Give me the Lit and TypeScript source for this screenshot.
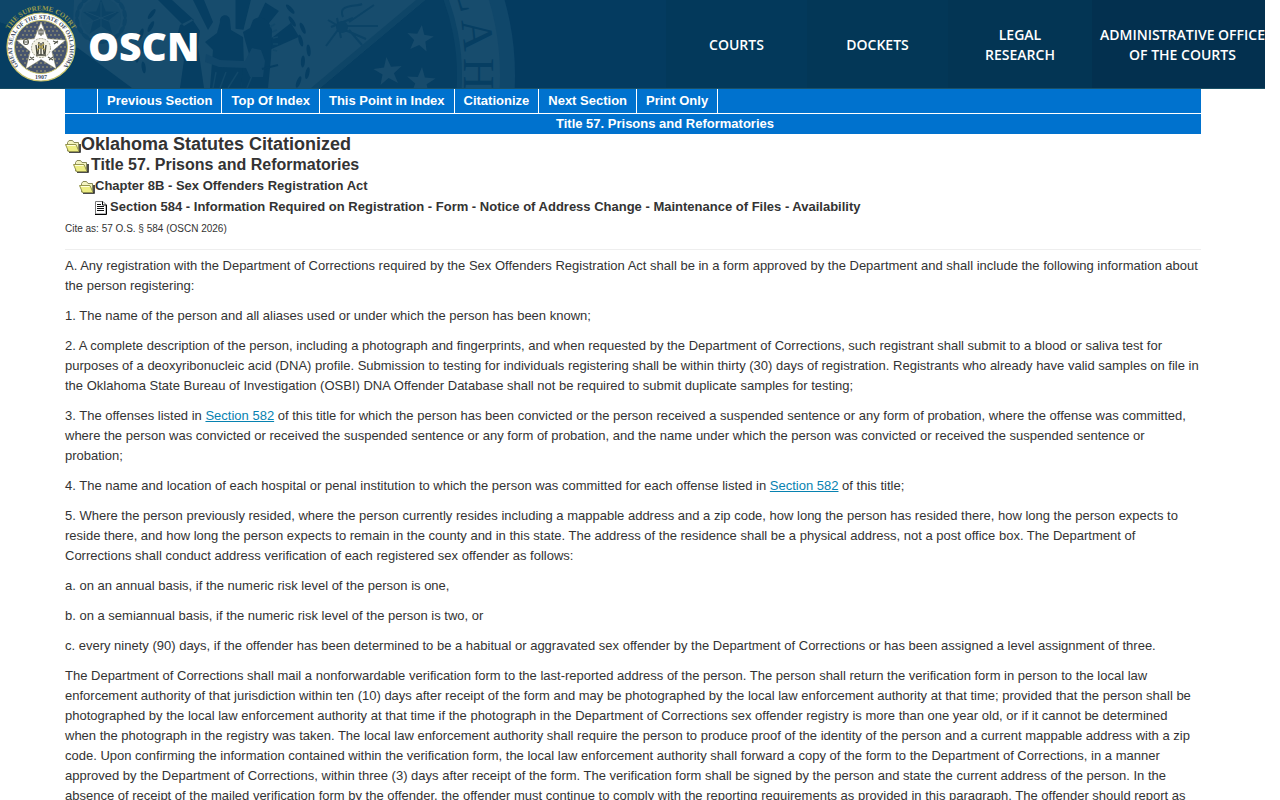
import { LitElement, html, css, svg } from "lit";
import { customElement } from "lit/decorators.js";

const starPoints = (cx: number, cy: number, outer: number, inner: number, turn = 0) =>
  Array.from({ length: 10 }, (_, i) => {
    const r = i % 2 ? inner : outer;
    const a = ((i * 36 - 90 + turn) * Math.PI) / 180;
    return `${(cx + r * Math.cos(a)).toFixed(1)},${(cy + r * Math.sin(a)).toFixed(1)}`;
  }).join(" ");

@customElement("court-seal")
export class CourtSeal extends LitElement {
  static styles = css`
    :host { display: block; width: 80px; height: 84px; }
    svg { display: block; overflow: visible; }
  `;
  render() {
    const dots = [];
    for (let y = -24; y <= 24; y += 4) {
      for (let x = -24; x <= 24; x += 4) {
        const sx = x + ((y / 4) % 2 ? 2 : 0);
        if (sx * sx + y * y < 620) dots.push(svg`<circle cx=${41 + sx} cy=${45 + y} r="0.8" fill="#b5ad72" />`);
      }
    }
    return html`<svg width="80" height="84" viewBox="0 0 80 84" role="img" aria-label="Great Seal of the State of Oklahoma">
      <defs>
        <path id="court" d="M6 38A35.500 35.500 0 0 1 76 38" />
        <path id="ring" d="M20 66A29 29 0 1 1 62 66" />
      </defs>
      <circle cx="41" cy="45" r="34" fill="#fff" stroke="#c9c46c" stroke-width="1.200" />
      <circle cx="41" cy="45" r="26.500" fill="#46546f" stroke="#c9c46c" stroke-width="1" />
      ${dots}
      <polygon points=${starPoints(41, 46, 26, 11.5)} fill="#fff" stroke="#8e8a60" stroke-width="0.5" />
      <circle cx="41" cy="46" r="9.500" fill="#f4f2e4" stroke="#8b8b72" stroke-width="0.800" stroke-dasharray="2 1" />
      <g stroke="#414338" fill="none" stroke-width="1.300">
        <path d="M36 43l1 9M39 40l-1 12M41 41v12M43 40l1 12M46 43l-1 9M36 53h10" />
        <path d="M38 42l3 3 3-3M37 48l4-3 4 3" stroke="#aa9a49" />
      </g>
      <g fill="none" stroke="#56584d" stroke-width="1.100">
        <path d="M39 28h4v4h-4zM41 26v8" />
        <circle cx="26" cy="40" r="2.500" /><path d="M24 40h4M53 39l5 2M54 42l4-3" />
        <path d="M29 58l5-3M30 55l4 3M48 55l5 3M49 58l4-3" />
      </g>
      <g font-family="Liberation Serif, serif" font-weight="700" text-anchor="middle">
        <text font-size="7" fill="#9a9c4c"><textPath href="#court" startOffset="50%">THE SUPREME COURT</textPath></text>
        <text font-size="6" fill="#3c4b61"><textPath href="#ring" startOffset="50%">GREAT SEAL OF THE STATE OF OKLAHOMA</textPath></text>
        <text x="41" y="77" font-size="6" fill="#3c4b61">1907</text>
      </g>
    </svg>`;
  }
}

@customElement("site-header")
export class SiteHeader extends LitElement {
  static styles = css`
    :host { display: block; }
    .bar {
      position: relative; display: flex; align-items: stretch; height: 88px; overflow: hidden;
      background: #043b60; border-bottom: 1px solid #1a5066; font-family: "Open Sans", "Noto Sans", sans-serif;
    }
    .art { position: absolute; inset: 0 auto 0 0; }
    .brand { position: relative; display: flex; align-items: center; gap: 8px; color: #fff; text-decoration: none; }
    .name { font: 800 39px/56px "Open Sans", sans-serif; margin-top: 4px; }
    .menu { position: relative; display: flex; margin-left: auto; }
    .item {
      display: flex; align-items: center; justify-content: center; box-sizing: border-box; min-width: 141px;
      padding-top: 2px; color: #fff; background: #03395b; text-align: center; text-decoration: none;
      font-size: 14px; line-height: 20px; font-weight: 600; white-space: pre-line;
    }
    .item:nth-child(2) { background: #033757; }
    .item:nth-child(3) { background: #033554; min-width: 144px; }
    .item:nth-child(4) { background: #03304f; padding-left: 8px; min-width: 173px; }
  `;
  render() {
    const light = "#174c6d";
    const dark = "#063e62";
    const rays = [7, 32, 59].map(
      (a) => svg`<path d="M-4 -37L-8 -70H8L4 -37Z" fill=${dark} transform=${`translate(235 66) rotate(${a})`} />`
    );
    const leaves = [...Array.from({ length: 9 }, (_, i) => 38 + i * 9), ...Array.from({ length: 6 }, (_, i) => 252 + i * 9)].map(
      (a, i) => svg`<ellipse cx="0" cy=${i % 2 ? -67 : -73} rx="6" ry="2" fill=${dark} transform=${`translate(${a > 180 ? 210 : 236} 58) rotate(${a + 10})`} />`
    );
    const wreath = Array.from({ length: 18 }, (_, i) =>
      svg`<ellipse cx="0" cy="-24" rx="4.500" ry="2" fill="#0d4568" transform=${`translate(101 18) rotate(${i * 20})`} />`
    );
    return html`<header class="bar">
      <svg class="art" width="600" height="88" viewBox="0 0 600 88" aria-hidden="true">
        <circle cx="240" cy="75" r="275" fill="#10476a" />
        <circle cx="240" cy="75" r="260" fill=${light} />
        <circle cx="240" cy="75" r="222" fill="#0c4467" />
        <circle cx="240" cy="75" r="217" fill=${dark} />
        <path d="M0 0H80V88H0Z" fill=${dark} />
        <path d="M0 0H425L320 88H132L78 48L0 22Z" fill=${light} />
        <path d="M0 0H74L72 46L0 22Z" fill="#0e4669" />
        <path d="M416 0H425L320 88H311Z" fill="#0e4567" />
        ${wreath}
        <circle cx="101" cy="18" r="20" fill="#144a6b" />
        <polygon points=${starPoints(101, 18, 19, 8)} fill="#0b4366" />
        <path d="M101 2V34M86 12L116 24M116 12L86 24" stroke=${light} stroke-width="1" />
        ${rays}
        ${leaves}
        <g fill=${dark}>
          <path d="M158 0L184 26 194 20 172 0ZM193 0L208 30 213 22 204 0ZM180 25l12-6 8 12-2 16 6 41h-24l4-28-8-20Z" />
          <path d="M220 22c-1-8 9-9 10-2l1 10 12 7 1 30-3 21h-31l3-38-8-8 12-9Z" />
          <path d="M253 20c7-6 16-1 19 10l-1 28-3 30h-27l2-20 6-14-4-14-2-8 7-4Z" />
        </g>
        <path d="M206 54l14 6 25 1 7-13 9 2 4 11-2 16h-13l-4-9-27-1-14-5Z" fill="#11476a" />
        <g fill="none" stroke="#11486a" stroke-width="1.500">
          <path d="M216 72l-3 16M226 72l-6 16M238 72l-10 16M252 76l-5 12" />
          <path d="M270 27l5-3M272 32l5-2M273 38l5-1M273 44l5 0M273 50l4 1" />
        </g>
        <path d="M262 69l16-4" stroke=${dark} stroke-width="2" />
        <g fill="none" stroke="#0b4366" stroke-width="2">
          <path d="M326 46L340 27 328 20M343 17C337 4 356 7 362 4M349 22L374 5M347 26L378 26M349 30L362 45M345 30L366 39M337 18L341 38M331 27L353 18" />
        </g>
        <circle cx="342" cy="27" r="6" fill="#0b4366" />
        <g fill="#174b6c">
          <polygon points=${starPoints(420, 39, 14, 6, 8)} />
          <polygon points=${starPoints(388, 72, 15, 6, -6)} />
          <polygon points=${starPoints(421, 82, 15, 6, 4)} />
        </g>
        <g fill=${dark} font-family="Liberation Serif, serif" font-size="44" text-anchor="middle">
          <text transform="translate(458 1) rotate(74)">L</text>
          <text transform="translate(463 36) rotate(84)">A</text>
          <text transform="translate(464 74) rotate(90)">H</text>
        </g>
      </svg>
      <a class="brand" href="#"><court-seal></court-seal><span class="name">OSCN</span></a>
      <nav class="menu" aria-label="Main">
        <a class="item" href="#">COURTS</a><a class="item" href="#">DOCKETS</a><a class="item" href="#">LEGAL
RESEARCH</a><a class="item" href="#">ADMINISTRATIVE OFFICE
OF THE COURTS</a>
      </nav>
    </header>`;
  }
}

const folder = html`<svg class="icon" width="16" height="14" viewBox="0 0 16 14" aria-hidden="true">
  <path d="M2.500 5V3.500L4 1.500H7.500L9 3.500H13.500V12H2.500Z" fill="#f3f3c0" stroke="#8a8a5a" />
  <path d="M15 5V13H4" fill="none" stroke="#111" stroke-width="1.500" />
  <path d="M0.500 5.500H11L14 12.500H3.500Z" fill="#eded84" stroke="#969650" />
  <path d="M2 6.500H10.500" stroke="#ffffdc" />
</svg>`;

const page = html`<svg class="icon" width="12" height="14" viewBox="0 0 12 14" aria-hidden="true">
  <path d="M0.500 0.500H8L11 3.500V13H0.500Z" fill="#fff" stroke="#777" />
  <path d="M11.500 4V13.500H0M7.500 0.500V4H11.500" fill="none" stroke="#000" />
  <path d="M2 3.500H6M2 5.500H9M2 7.500H9M2 9.500H9" stroke="#111" />
</svg>`;

const sectionLink = html`<a class="ref" href="#">Section 582</a>`;

@customElement("app-root")
export class AppRoot extends LitElement {
  static styles = css`
    :host {
      display: block; box-sizing: border-box; height: 100vh; overflow: hidden; padding-right: 15px;
      background: #fff; color: #333; font: 13px/20px "Liberation Sans", Arial, sans-serif;
    }
    .content { padding: 0 64px 0 65px; }
    .tools { display: flex; height: 24px; padding-left: 32px; background: #0072ce; border-bottom: 1px solid #fff; }
    .tool {
      padding: 0 9px; border-left: 1px solid #fff; color: #fff; font-weight: 700; line-height: 23px; text-decoration: none;
    }
    .tool:last-child { border-right: 1px solid #fff; }
    .banner { padding-left: 64px; background: #0072ce; color: #fff; font-weight: 700; text-align: center; }
    .level { display: flex; margin: 0; font-weight: 700; font-size: 13px; line-height: 21px; }
    .icon { flex: none; margin-top: 5px; }
    .first { font-size: 18px; line-height: 20px; }
    .second { font-size: 16px; padding-left: 8px; gap: 2px; }
    .third { padding-left: 14px; }
    .fourth { padding-left: 30px; gap: 3px; }
    .cite { margin: 2px 0 10px; font-size: 10px; }
    .rule { margin: 0 0 6px; border: 0; border-top: 1px solid #eee; }
    .text { margin: 0 0 10px; }
    .ref { color: #0782b1; text-decoration: underline; }
  `;
  render() {
    return html`<site-header></site-header>
      <main class="content">
        <nav class="tools" aria-label="Document">
          ${["Previous Section", "Top Of Index", "This Point in Index", "Citationize", "Next Section", "Print Only"].map(
            (t) => html`<a class="tool" href="#">${t}</a>`
          )}
        </nav>
        <div class="banner">Title 57. Prisons and Reformatories</div>
        <h1 class="level first">${folder}<span>Oklahoma Statutes Citationized</span></h1>
        <h2 class="level second">${folder}<span>Title 57. Prisons and Reformatories</span></h2>
        <h3 class="level third">${folder}<span>Chapter 8B - Sex Offenders Registration Act</span></h3>
        <h4 class="level fourth">${page}<span>Section 584 - Information Required on Registration - Form - Notice of Address Change - Maintenance of Files - Availability</span></h4>
        <p class="cite">Cite as: 57 O.S. § 584 (OSCN 2026)</p>
        <hr class="rule" />
        <p class="text">A. Any registration with the Department of Corrections required by the Sex Offenders Registration Act shall be in a form approved by the Department and shall include the following information about the person registering:</p>
        <p class="text">1. The name of the person and all aliases used or under which the person has been known;</p>
        <p class="text">2. A complete description of the person, including a photograph and fingerprints, and when requested by the Department of Corrections, such registrant shall submit to a blood or saliva test for purposes of a deoxyribonucleic acid (DNA) profile. Submission to testing for individuals registering shall be within thirty (30) days of registration. Registrants who already have valid samples on file in the Oklahoma State Bureau of Investigation (OSBI) DNA Offender Database shall not be required to submit duplicate samples for testing;</p>
        <p class="text">3. The offenses listed in ${sectionLink} of this title for which the person has been convicted or the person received a suspended sentence or any form of probation, where the offense was committed, where the person was convicted or received the suspended sentence or any form of probation, and the name under which the person was convicted or received the suspended sentence or probation;</p>
        <p class="text">4. The name and location of each hospital or penal institution to which the person was committed for each offense listed in ${sectionLink} of this title;</p>
        <p class="text">5. Where the person previously resided, where the person currently resides including a mappable address and a zip code, how long the person has resided there, how long the person expects to reside there, and how long the person expects to remain in the county and in this state. The address of the residence shall be a physical address, not a post office box. The Department of Corrections shall conduct address verification of each registered sex offender as follows:</p>
        <p class="text">a. on an annual basis, if the numeric risk level of the person is one,</p>
        <p class="text">b. on a semiannual basis, if the numeric risk level of the person is two, or</p>
        <p class="text">c. every ninety (90) days, if the offender has been determined to be a habitual or aggravated sex offender by the Department of Corrections or has been assigned a level assignment of three.</p>
        <p class="text">The Department of Corrections shall mail a nonforwardable verification form to the last-reported address of the person. The person shall return the verification form in person to the local law enforcement authority of that jurisdiction within ten (10) days after receipt of the form and may be photographed by the local law enforcement authority at that time; provided that the person shall be photographed by the local law enforcement authority at that time if the photograph in the Department of Corrections sex offender registry is more than one year old, or if it cannot be determined when the photograph in the registry was taken. The local law enforcement authority shall require the person to produce proof of the identity of the person and a current mappable address with a zip code. Upon confirming the information contained within the verification form, the local law enforcement authority shall forward a copy of the form to the Department of Corrections, in a manner approved by the Department of Corrections, within three (3) days after receipt of the form. The verification form shall be signed by the person and state the current address of the person. In the absence of receipt of the mailed verification form by the offender, the offender must continue to comply with the reporting requirements as provided in this paragraph. The offender should report as</p>
      </main>`;
  }
}
